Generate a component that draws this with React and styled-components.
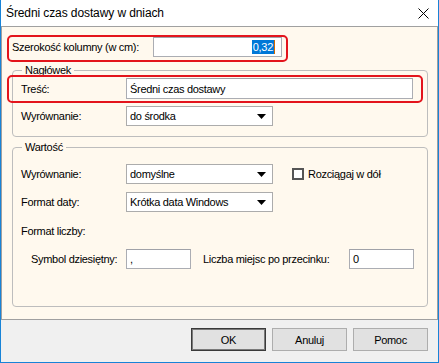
import React from "react";
import styled, { createGlobalStyle, css } from "styled-components";

const GlobalStyle = createGlobalStyle`
  * {
    box-sizing: border-box;
  }

  body {
    margin: 0;
    font-family: "Liberation Sans", Arial, sans-serif;
    font-size: 11px;
    letter-spacing: -0.3px;
    color: #000;
  }
`;

const Window = styled.div`
  width: 439px;
  height: 363px;
  display: flex;
  flex-direction: column;
  background: #fff;
  border: 1px solid #1883d7;
  border-top: none;
`;

const TitleBar = styled.div`
  height: 26px;
  flex: none;
  display: flex;
  align-items: center;
  justify-content: space-between;
  padding: 0 9px 0 5px;
  font-size: 12px;
  letter-spacing: -0.1px;
`;

const Panel = styled.div`
  height: 294px;
  flex: none;
  display: flex;
  flex-direction: column;
  padding: 10px 9px 0 10px;
  background: #fff9ee;
  border: 1px solid #a0a0a0;
`;

const Footer = styled.div`
  flex: 1;
  display: flex;
  justify-content: flex-end;
  align-items: flex-start;
  gap: 6px;
  padding: 8px 10px 0 0;
  background: #f0f0f0;
`;

const Button = styled.div`
  width: 75px;
  height: 23px;
  display: flex;
  align-items: center;
  justify-content: center;
  background: #e1e1e1;
  border: 1px solid #adadad;
  ${p =>
    p.$default &&
    css`
      border-color: #3a3a3a;
      box-shadow: inset 0 0 0 1px #7a7a7a;
    `}
`;

const Row = styled.div`
  position: relative;
  display: flex;
  align-items: center;
  align-self: ${p => (p.$fit ? "flex-start" : "stretch")};
  padding-left: ${p => p.$indent || 0}px;
  margin-top: ${p => p.$gap || 0}px;

  ${p =>
    p.$mark &&
    css`
      &::before {
        content: "";
        position: absolute;
        top: ${p.$mark[0]}px;
        right: ${p.$mark[1]}px;
        bottom: ${p.$mark[2]}px;
        left: ${p.$mark[3]}px;
        border: 2px solid #e3141c;
        border-radius: 5px;
        pointer-events: none;
      }
    `}
`;

const Label = styled.span`
  width: ${p => p.$w}px;
  flex: none;
  margin-left: ${p => p.$ml || 0}px;
  white-space: nowrap;
`;

const TextBox = styled.div`
  width: ${p => p.$w}px;
  height: ${p => p.$h || 20}px;
  flex: none;
  display: flex;
  align-items: center;
  justify-content: ${p => (p.$right ? "flex-end" : "flex-start")};
  padding: 0 ${p => (p.$right ? 6 : 3)}px 0 3px;
  background: #fff;
  border: 1px solid #abadb3;
  border-top-color: #a0a2a8;
  white-space: nowrap;
`;

const Selected = styled.span`
  background: #0078d7;
  color: #fff;
  line-height: 14px;
  padding: 0 1px;
`;

const Caret = styled.span`
  width: 1px;
  height: 14px;
  background: #d46a00;
`;

const SelectBox = styled.div`
  width: 147px;
  height: 20px;
  flex: none;
  display: flex;
  align-items: center;
  justify-content: space-between;
  padding: 0 6px 0 3px;
  background: #fff;
  border: 1px solid #acacac;
`;

const GroupBox = styled.fieldset`
  margin: ${p => p.$top}px 0 0;
  padding: ${p => p.$pt}px 8px ${p => p.$pb}px;
  border: 1px solid #bdbdbd;
  border-radius: 4px;
  min-width: 0;
`;

const Legend = styled.legend`
  padding: 0 3px;
  margin-left: 1px;
  line-height: 14px;
`;

const CheckBox = styled.span`
  width: 12px;
  height: 12px;
  flex: none;
  margin: 0 4px 0 19px;
  background: #fff;
  border: 2px solid #555;
`;

const TextLine = styled.div`
  height: 20px;
  display: flex;
  align-items: center;
  margin-top: 9px;
`;

function Arrow() {
  return (
    <svg width="9" height="5" viewBox="0 0 9 5">
      <polygon points="0,0 9,0 4.5,5" fill="#000" />
    </svg>
  );
}

function Select({ value }) {
  return (
    <SelectBox>
      {value}
      <Arrow />
    </SelectBox>
  );
}

function CloseIcon() {
  return (
    <svg width="11" height="11" viewBox="0 0 11 11">
      <path d="M0.5 0.5 L10.5 10.5 M10.5 0.5 L0.5 10.5" stroke="#000" strokeWidth="1" />
    </svg>
  );
}

function App() {
  return (
    <React.Fragment>
      <GlobalStyle />
      <Window>
        <TitleBar>
          Średni czas dostawy w dniach
          <CloseIcon />
        </TitleBar>
        <Panel>
          <Row $fit $mark={[-2, -6, -5, -5]}>
            <Label $w={141}>Szerokość kolumny (w cm):</Label>
            <TextBox $w={129} $right>
              <Selected>0,32</Selected>
              <Caret />
            </TextBox>
          </Row>

          <GroupBox $top={6} $pt={1} $pb={10}>
            <Legend>Nagłówek</Legend>
            <Row $mark={[-3, -4, -4, -14]}>
              <Label $w={105}>Treść:</Label>
              <TextBox $w={287} $h={21}>
                Średni czas dostawy
              </TextBox>
            </Row>
            <Row $gap={7}>
              <Label $w={105}>Wyrównanie:</Label>
              <Select value="do środka" />
            </Row>
          </GroupBox>

          <GroupBox $top={3} $pt={10} $pb={37}>
            <Legend>Wartość</Legend>
            <Row>
              <Label $w={105}>Wyrównanie:</Label>
              <Select value="domyślne" />
              <CheckBox />
              Rozciągaj w dół
            </Row>
            <Row $gap={8}>
              <Label $w={105}>Format daty:</Label>
              <Select value="Krótka data Windows" />
            </Row>
            <TextLine>Format liczby:</TextLine>
            <Row $gap={8} $indent={10}>
              <Label $w={95}>Symbol dziesiętny:</Label>
              <TextBox $w={65}>,</TextBox>
              <Label $w={146} $ml={12}>
                Liczba miejsc po przecinku:
              </Label>
              <TextBox $w={65}>0</TextBox>
            </Row>
          </GroupBox>
        </Panel>
        <Footer>
          <Button $default>OK</Button>
          <Button>Anuluj</Button>
          <Button>Pomoc</Button>
        </Footer>
      </Window>
    </React.Fragment>
  );
}

export default App;
